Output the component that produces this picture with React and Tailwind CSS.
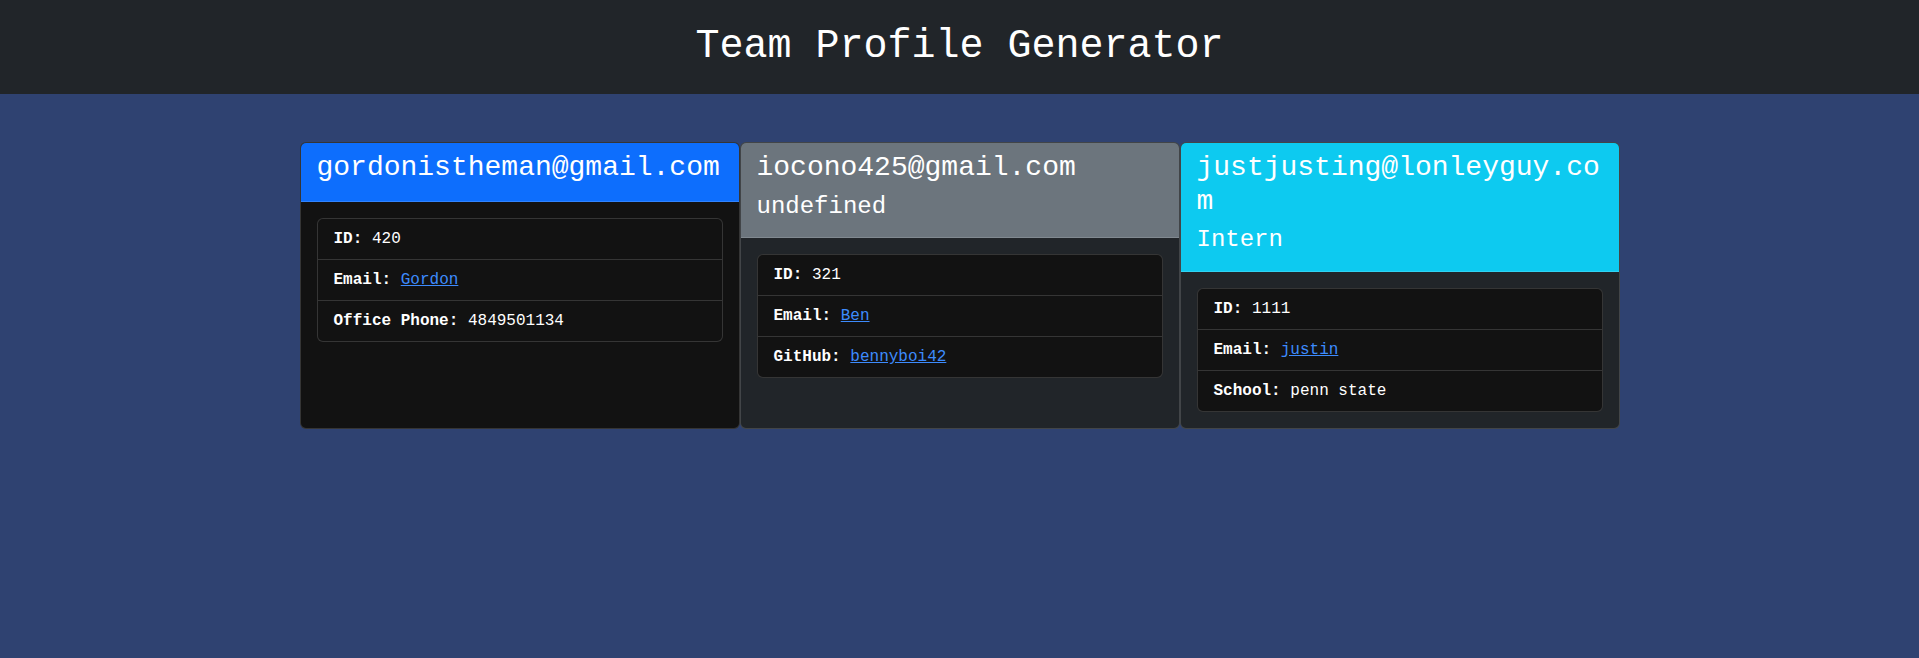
const team = [
  {
    title: "gordonistheman@gmail.com",
    color: "bg-[#0d6efd]",
    body: "bg-[#121212]",
    id: "420",
    name: "Gordon",
    extra: { label: "Office Phone:", value: "4849501134" },
  },
  {
    title: "iocono425@gmail.com",
    role: "undefined",
    color: "bg-[#6c757d]",
    body: "bg-[#212529]",
    id: "321",
    name: "Ben",
    extra: { label: "GitHub:", value: "bennyboi42", link: true },
  },
  {
    title: "justjusting@lonleyguy.com",
    role: "Intern",
    color: "bg-[#0dcaf0]",
    body: "bg-[#212529]",
    id: "1111",
    name: "justin",
    extra: { label: "School:", value: "penn state" },
  },
];

function Card({ member }) {
  return (
    <div
      className={`flex flex-col overflow-hidden rounded-md border border-white/15 [overflow-wrap:break-word] ${member.body}`}
    >
      <div
        className={`border-b border-white/15 px-4 py-2 text-white ${member.color}`}
      >
        <h3 className="mb-2 text-[28px] leading-[1.2]">{member.title}</h3>
        {member.role && (
          <h4 className="mb-2 text-[24px] leading-[1.2]">{member.role}</h4>
        )}
      </div>
      <div className="p-4">
        <ul className="rounded-md border border-white/15 bg-[#121212] text-base leading-6 text-white">
          <li className="border-b border-white/15 px-4 py-2">
            <b>ID:</b> {member.id}
          </li>
          <li className="border-b border-white/15 px-4 py-2">
            <b>Email:</b>{" "}
            <a href="#" className="text-[#3d8bfd] underline">
              {member.name}
            </a>
          </li>
          <li className="px-4 py-2">
            <b>{member.extra.label}</b>{" "}
            {member.extra.link ? (
              <a href="#" className="text-[#3d8bfd] underline">
                {member.extra.value}
              </a>
            ) : (
              member.extra.value
            )}
          </li>
        </ul>
      </div>
    </div>
  );
}

export default function App() {
  return (
    <div className="min-h-screen bg-[#2f4271] font-['Liberation_Mono','Courier_New',monospace]">
      <header className="flex h-[94px] items-center justify-center bg-[#212529]">
        <h1 className="text-[40px] leading-[1.2] text-white">
          Team Profile Generator
        </h1>
      </header>
      <main className="mx-auto mt-[48px] grid w-[1320px] grid-cols-3">
        {team.map((m) => (
          <Card key={m.title} member={m} />
        ))}
      </main>
    </div>
  );
}
